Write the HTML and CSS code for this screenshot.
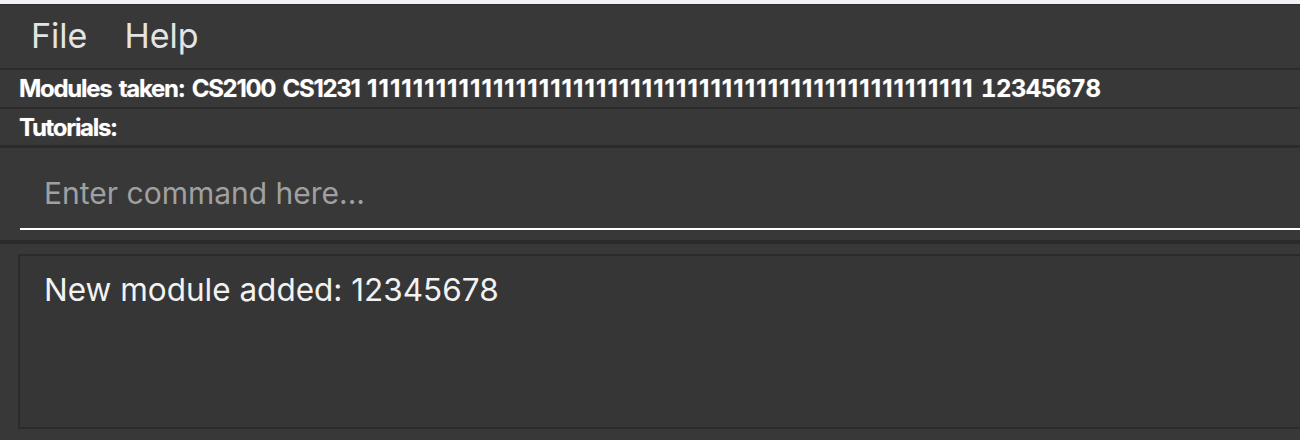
FILE: index.html
```html
<!DOCTYPE html>
<html>
<head>
<meta charset="utf-8">
<link rel="stylesheet" href="styles.css">
</head>
<body>
<div class="app">
  <div class="titlestrip"></div>
  <div class="menubar">
    <span class="menu-item">File</span>
    <span class="menu-item">Help</span>
  </div>
  <div class="sep sep-2"></div>
  <div class="info-row row-modules"><span class="label">Modules taken: CS2100 CS1231 <span class="ones">11111111111111111111111111111111111111111111111111111</span> <span class="nums">12345678</span></span></div>
  <div class="sep sep-2"></div>
  <div class="info-row row-tutorials"><span class="label">Tutorials:</span></div>
  <div class="sep sep-3"></div>
  <div class="command-area">
    <div class="command-box"><span class="placeholder">Enter command here...</span></div>
  </div>
  <div class="sep sep-4"></div>
  <div class="result-area">
    <div class="result-box">New module added: 12345678</div>
  </div>
</div>
</body>
</html>
```
FILE: styles.css
```css
html, body {
  margin: 0;
  padding: 0;
}
body {
  background: #383838;
  width: 1300px;
  height: 440px;
  overflow: hidden;
  font-family: "Inter", "Noto Sans", sans-serif;
}
.app {
  display: flex;
  flex-direction: column;
  height: 440px;
}
.titlestrip {
  height: 4px;
  background: #f4f2f9;
  flex: none;
}
.menubar {
  height: 63px;
  border-top: 1px solid #2e2e2e;
  display: flex;
  align-items: center;
  padding-left: 31px;
  gap: 37px;
  flex: none;
}
.menu-item {
  font-size: 34px;
  color: #e4e4e4;
  padding-bottom: 2px;
}
.sep {
  background: #2b2b2b;
  flex: none;
}
.sep-2 { height: 2px; }
.sep-3 { height: 3px; }
.sep-4 { height: 4px; }
.info-row {
  display: flex;
  align-items: center;
  padding-left: 19px;
  flex: none;
}
.row-modules { height: 37px; }
.row-tutorials { height: 36px; }
.label {
  font-size: 24px;
  font-weight: 700;
  letter-spacing: -1.3px;
  word-spacing: 3px;
  color: #ffffff;
  text-shadow: 0 0 1px #707070, 0 0 1px #707070;
  white-space: nowrap;
}
.ones {
  letter-spacing: 1.1px;
}
.nums {
  font-variant-numeric: tabular-nums;
  letter-spacing: -0.6px;
}
.command-area {
  height: 92px;
  padding-left: 20px;
  flex: none;
}
.command-box {
  height: 82px;
  border-bottom: 2px solid #ffffff;
  display: flex;
  align-items: center;
  padding-left: 24px;
  padding-top: 10px;
  box-sizing: border-box;
}
.placeholder {
  font-size: 30px;
  color: #a0a0a0;
}
.result-area {
  flex: 1;
  padding: 10px 0 0 18px;
}
.result-box {
  width: 1320px;
  height: 175px;
  box-sizing: border-box;
  border: 2px solid #2b2b2b;
  background: #363636;
  padding: 14px 0 0 24px;
  font-size: 31.5px;
  color: #f2f2f2;
}
```
